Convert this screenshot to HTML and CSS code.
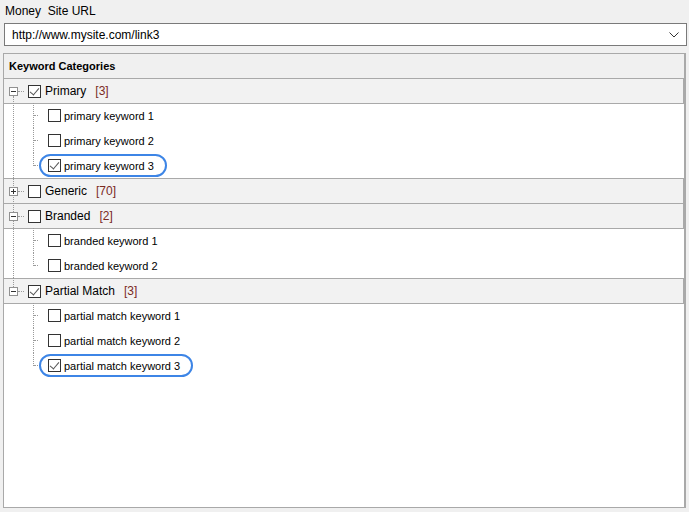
FILE: index.html
```html
<!DOCTYPE html>
<html>
<head>
    <meta charset="UTF-8">
    <title>Keyword Categories</title>
    <link rel="stylesheet" href="styles.css">
</head>
<body>
    <div class="field-label">Money&nbsp; Site URL</div>

    <div class="combo">
        <span class="combo-value">http://www.mysite.com/link3</span>
        <svg class="combo-arrow" width="10" height="6" viewBox="0 0 10 6">
            <polyline points="0.5,0.5 5,5 9.5,0.5" fill="none" stroke="#333" stroke-width="1"/>
        </svg>
    </div>

    <div class="panel">
        <div class="panel-header">Keyword Categories</div>

        <div class="tree">
            <div class="group first">
                <div class="cat">
                    <span class="expander open"></span>
                    <span class="check checked"></span>
                    <span class="cat-name">Primary</span>
                    <span class="count">[3]</span>
                </div>
                <div class="kids">
                    <div class="kid"><span class="item"><span class="check"></span>primary keyword 1</span></div>
                    <div class="kid"><span class="item"><span class="check"></span>primary keyword 2</span></div>
                    <div class="kid"><span class="item selected"><span class="check checked"></span>primary keyword 3</span></div>
                </div>
            </div>

            <div class="group">
                <div class="cat">
                    <span class="expander"></span>
                    <span class="check"></span>
                    <span class="cat-name">Generic</span>
                    <span class="count">[70]</span>
                </div>
            </div>

            <div class="group">
                <div class="cat">
                    <span class="expander open"></span>
                    <span class="check"></span>
                    <span class="cat-name">Branded</span>
                    <span class="count">[2]</span>
                </div>
                <div class="kids">
                    <div class="kid"><span class="item"><span class="check"></span>branded keyword 1</span></div>
                    <div class="kid"><span class="item"><span class="check"></span>branded keyword 2</span></div>
                </div>
            </div>

            <div class="group last">
                <div class="cat">
                    <span class="expander open"></span>
                    <span class="check checked"></span>
                    <span class="cat-name">Partial Match</span>
                    <span class="count">[3]</span>
                </div>
                <div class="kids">
                    <div class="kid"><span class="item"><span class="check"></span>partial match keyword 1</span></div>
                    <div class="kid"><span class="item"><span class="check"></span>partial match keyword 2</span></div>
                    <div class="kid"><span class="item selected"><span class="check checked"></span>partial match keyword 3</span></div>
                </div>
            </div>
        </div>
    </div>
</body>
</html>
```

FILE: styles.css
```css
* {
    margin: 0;
    padding: 0;
    box-sizing: border-box;
}

body {
    font-family: "Liberation Sans", Arial, sans-serif;
    font-size: 12px;
    color: #000;
    background: #f0f0f0;
    width: 689px;
    height: 512px;
    overflow: hidden;
}

.field-label {
    height: 23px;
    padding: 4px 0 0 5px;
    line-height: 15px;
}

.combo {
    display: flex;
    align-items: center;
    justify-content: space-between;
    height: 23px;
    margin: 0 2px 0 4px;
    padding: 0 7px 0 7px;
    background: #fff;
    border: 1px solid #7a7a7a;
}

.combo-arrow {
    display: block;
}

.panel {
    height: 455px;
    margin: 7px 3px 0 3px;
    background: #fff;
    border: 1px solid #a9a9a9;
    border-right-width: 2px;
}

.panel-header {
    height: 24px;
    padding-left: 5px;
    line-height: 24px;
    font-size: 11px;
    font-weight: bold;
    background: #f0f0f0;
}

/* tree */

.group {
    position: relative;
}

.group::before {
    content: "";
    position: absolute;
    left: 9px;
    top: 0;
    bottom: 0;
    border-left: 1px dotted #9a9a9a;
    z-index: 1;
}

.group.first::before {
    top: 18px;
}

.group.last::before {
    bottom: auto;
    height: 9px;
}

.cat {
    position: relative;
    display: flex;
    align-items: center;
    height: 26px;
    margin-bottom: -1px;
    padding-left: 5px;
    background: #f2f2f2;
    border-top: 1px solid #a9a9a9;
    border-bottom: 1px solid #a9a9a9;
    border-right: 1px solid #a9a9a9;
}

.cat::after {
    content: "";
    position: absolute;
    left: 14px;
    top: 12px;
    width: 6px;
    border-top: 1px dotted #9a9a9a;
}

.expander {
    position: relative;
    z-index: 2;
    width: 9px;
    height: 9px;
    margin-right: 10px;
    border: 1px solid #919191;
    background: #fff;
}

.expander::before,
.expander::after {
    content: "";
    position: absolute;
    background: #333;
}

.expander::before {
    left: 1px;
    top: 3px;
    width: 5px;
    height: 1px;
}

.expander::after {
    left: 3px;
    top: 1px;
    width: 1px;
    height: 5px;
}

.expander.open::after {
    display: none;
}

.cat .check {
    margin-right: 4px;
}

.count {
    margin-left: 9px;
    color: #7b2a1e;
}

.kid {
    position: relative;
    display: flex;
    align-items: center;
    height: 25px;
    padding-left: 35px;
    font-size: 11px;
}

.kid::before {
    content: "";
    position: absolute;
    left: 29px;
    top: 0;
    bottom: 0;
    border-left: 1px dotted #9a9a9a;
}

.kid:last-child::before {
    bottom: 12px;
}

.kid::after {
    content: "";
    position: absolute;
    left: 30px;
    top: 12px;
    width: 10px;
    border-top: 1px dotted #9a9a9a;
}

.item {
    position: relative;
    z-index: 1;
    display: inline-flex;
    align-items: center;
    height: 23px;
    padding: 0 11px 0 7px;
    border: 2px solid transparent;
    border-radius: 12px;
    background: #fff;
}

.item.selected {
    border-color: #3d85e6;
}

.item .check {
    margin-right: 3px;
}

.check {
    position: relative;
    display: inline-block;
    flex: none;
    width: 13px;
    height: 13px;
    background: #fff;
    border: 1px solid #333;
}

.check.checked::after {
    content: "";
    position: absolute;
    left: 3px;
    top: 0px;
    width: 4px;
    height: 8px;
    border-right: 1px solid #555;
    border-bottom: 1px solid #555;
    transform: rotate(40deg);
}
```
